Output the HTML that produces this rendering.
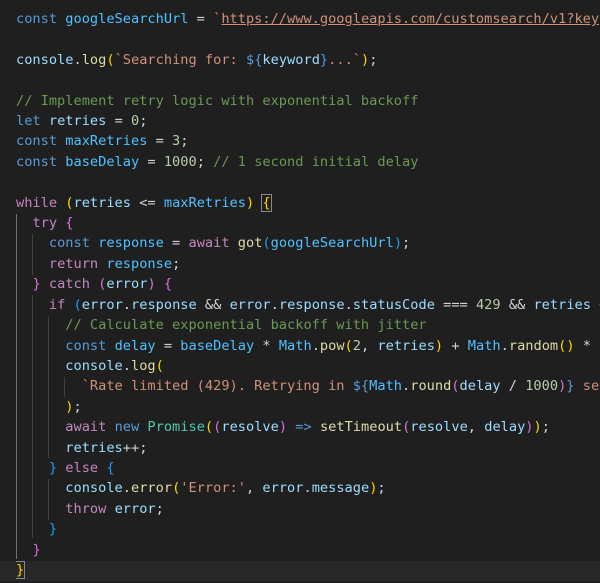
<!DOCTYPE html>
<html><head><meta charset="utf-8"><style>
html,body{margin:0;padding:0;background:#1f1f1f;width:600px;height:583px;overflow:hidden}
#c{position:absolute;left:16px;top:9px;width:584px;overflow:hidden;font-family:"DejaVu Sans Mono","Liberation Mono",monospace;font-size:13.65px;line-height:20.4px;color:#d4d4d4;white-space:pre;margin:0}
.k{color:#569cd6}.v{color:#9cdcfe}.c{color:#4fc1ff}.s{color:#ce9178}.cm{color:#6a9955}.n{color:#b5cea8}.p{color:#c586c0}.f{color:#dcdcaa}.t{color:#4ec9b0}
.y{color:#ffd700}.m{color:#da70d6}.b{color:#179fff}.u{text-decoration:underline}
.g{position:absolute;width:1px;background:#404040}
.hl{position:absolute;left:0;width:600px;top:561px;height:20px;background:#282828}
.box{outline:1px solid #888;}
</style></head><body>
<div class="hl"></div>
<div class="g" style="left:16px;top:214px;height:345px;background:#707070"></div>
<div class="g" style="left:32px;top:234px;height:41px"></div>
<div class="g" style="left:32px;top:295px;height:243px"></div>
<div class="g" style="left:48px;top:316px;height:142px"></div>
<div class="g" style="left:48px;top:479px;height:41px"></div>
<div class="g" style="left:64px;top:377px;height:20px"></div>
<pre id="c"><span class="k">const</span> <span class="c">googleSearchUrl</span> = <span class="s">`<span class="u">https://www.googleapis.com/customsearch/v1?key</span></span>

<span class="v">console</span>.<span class="f">log</span><span class="y">(</span><span class="s">`Searching for: </span><span class="k">${</span><span class="v">keyword</span><span class="k">}</span><span class="s">...`</span><span class="y">)</span>;

<span class="cm">// Implement retry logic with exponential backoff</span>
<span class="k">let</span> <span class="v">retries</span> = <span class="n">0</span>;
<span class="k">const</span> <span class="c">maxRetries</span> = <span class="n">3</span>;
<span class="k">const</span> <span class="c">baseDelay</span> = <span class="n">1000</span>; <span class="cm">// 1 second initial delay</span>

<span class="p">while</span> <span class="y">(</span><span class="v">retries</span> &lt;= <span class="c">maxRetries</span><span class="y">)</span> <span class="y box">{</span>
  <span class="p">try</span> <span class="m">{</span>
    <span class="k">const</span> <span class="c">response</span> = <span class="p">await</span> <span class="f">got</span><span class="b">(</span><span class="c">googleSearchUrl</span><span class="b">)</span>;
    <span class="p">return</span> <span class="c">response</span>;
  <span class="m">}</span> <span class="p">catch</span> <span class="m">(</span><span class="v">error</span><span class="m">)</span> <span class="m">{</span>
    <span class="p">if</span> <span class="b">(</span><span class="v">error</span>.<span class="v">response</span> &amp;&amp; <span class="v">error</span>.<span class="v">response</span>.<span class="v">statusCode</span> === <span class="n">429</span> &amp;&amp; <span class="v">retries</span> &lt;
      <span class="cm">// Calculate exponential backoff with jitter</span>
      <span class="k">const</span> <span class="c">delay</span> = <span class="c">baseDelay</span> * <span class="c">Math</span>.<span class="f">pow</span><span class="y">(</span><span class="n">2</span>, <span class="v">retries</span><span class="y">)</span> + <span class="c">Math</span>.<span class="f">random</span><span class="y">()</span> *
      <span class="v">console</span>.<span class="f">log</span><span class="y">(</span>
        <span class="s">`Rate limited (429). Retrying in </span><span class="k">${</span><span class="c">Math</span>.<span class="f">round</span><span class="m">(</span><span class="v">delay</span> / <span class="n">1000</span><span class="m">)</span><span class="k">}</span><span class="s"> seconds`</span>
      <span class="y">)</span>;
      <span class="p">await</span> <span class="k">new</span> <span class="t">Promise</span><span class="y">(</span><span class="m">(</span><span class="v">resolve</span><span class="m">)</span> <span class="k">=&gt;</span> <span class="f">setTimeout</span><span class="m">(</span><span class="v">resolve</span>, <span class="v">delay</span><span class="m">)</span><span class="y">)</span>;
      <span class="v">retries</span>++;
    <span class="b">}</span> <span class="p">else</span> <span class="b">{</span>
      <span class="v">console</span>.<span class="f">error</span><span class="y">(</span><span class="s">'Error:'</span>, <span class="v">error</span>.<span class="v">message</span><span class="y">)</span>;
      <span class="p">throw</span> <span class="v">error</span>;
    <span class="b">}</span>
  <span class="m">}</span>
<span class="y box">}</span></pre>
</body></html>
